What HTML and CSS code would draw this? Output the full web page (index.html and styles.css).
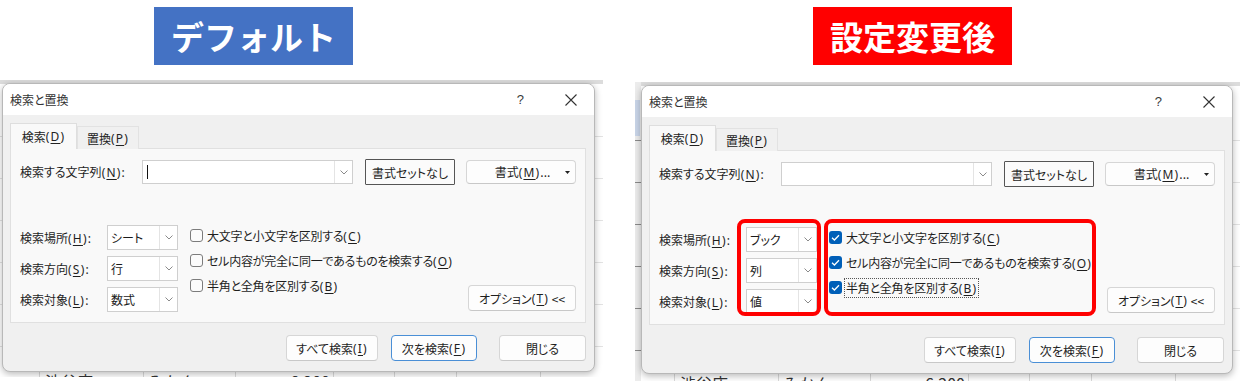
FILE: index.html
```html
<!DOCTYPE html>
<html lang="ja">
<head>
<meta charset="utf-8">
<title>検索と置換</title>
<link rel="stylesheet" href="styles.css">
</head>
<body>
<div class="page">
  <section class="half">
    <div class="tag tag-blue">デフォルト</div>
    <div class="screen screen-left">
      <div class="dialog">
        <div class="titlebar">
          <span class="title">検索と置換</span>
          <span class="help">?</span>
          <svg class="close" width="12" height="12" viewBox="0 0 12 12"><path d="M0.5 0.5L11.5 11.5M11.5 0.5L0.5 11.5"/></svg>
        </div>
        <div class="dbody">
          <div class="tabs">
            <div class="tab tab-active">検索<span class="k">(<u>D</u>)</span></div>
            <div class="tab">置換<span class="k">(<u>P</u>)</span></div>
          </div>
          <div class="panel">
            <div class="find-row">
              <span class="lbl lbl-find">検索する文字列<span class="k">(<u>N</u>):</span></span>
              <div class="input"><span class="field"><span class="caret"></span></span><span class="drop"><svg width="8" height="5" viewBox="0 0 8 5"><polyline points="0.5,0.5 4,4 7.5,0.5"/></svg></span></div>
              <div class="btn btn-noformat">書式セットなし</div>
              <div class="btn btn-format"><span></span><span>書式<span class="k">(<u>M</u>)</span>...</span><svg class="tri" width="5" height="3" viewBox="0 0 5 3"><polygon points="0,0 5,0 2.5,3"/></svg></div>
            </div>
            <div class="opts">
              <div class="combos">
                <div class="crow"><span class="lbl">検索場所<span class="k">(<u>H</u>):</span></span><div class="combo"><span class="field">シート</span><span class="drop"><svg width="8" height="5" viewBox="0 0 8 5"><polyline points="0.5,0.5 4,4 7.5,0.5"/></svg></span></div></div>
                <div class="crow"><span class="lbl">検索方向<span class="k">(<u>S</u>):</span></span><div class="combo"><span class="field">行</span><span class="drop"><svg width="8" height="5" viewBox="0 0 8 5"><polyline points="0.5,0.5 4,4 7.5,0.5"/></svg></span></div></div>
                <div class="crow"><span class="lbl">検索対象<span class="k">(<u>L</u>):</span></span><div class="combo"><span class="field">数式</span><span class="drop"><svg width="8" height="5" viewBox="0 0 8 5"><polyline points="0.5,0.5 4,4 7.5,0.5"/></svg></span></div></div>
              </div>
              <div class="checks">
                <div class="chk"><span class="box"></span><span class="ctext">大文字と小文字を区別する<span class="k">(<u>C</u>)</span></span></div>
                <div class="chk"><span class="box"></span><span class="ctext">セル内容が完全に同一であるものを検索する<span class="k">(<u>O</u>)</span></span></div>
                <div class="chk"><span class="box"></span><span class="ctext">半角と全角を区別する<span class="k">(<u>B</u>)</span></span></div>
              </div>
              <div class="btn btn-opt">オプション<span class="k">(<u>T</u>)</span>&nbsp;&lt;&lt;</div>
            </div>
          </div>
          <div class="footer">
            <div class="btn btn-all">すべて検索<span class="k">(<u>I</u>)</span></div>
            <div class="btn btn-next">次を検索<span class="k">(<u>F</u>)</span></div>
            <div class="btn btn-close">閉じる</div>
          </div>
        </div>
      </div>
      <div class="sheet-row">
        <span class="cell c1">渋谷店</span>
        <span class="cell c2">みかん</span>
        <span class="cell c3">6,200</span>
      </div>
    </div>
  </section>

  <section class="half">
    <div class="tag tag-red">設定変更後</div>
    <div class="screen screen-right">
      <div class="dialog dialog-right">
        <div class="titlebar">
          <span class="title">検索と置換</span>
          <span class="help">?</span>
          <svg class="close" width="12" height="12" viewBox="0 0 12 12"><path d="M0.5 0.5L11.5 11.5M11.5 0.5L0.5 11.5"/></svg>
        </div>
        <div class="dbody">
          <div class="tabs">
            <div class="tab tab-active">検索<span class="k">(<u>D</u>)</span></div>
            <div class="tab">置換<span class="k">(<u>P</u>)</span></div>
          </div>
          <div class="panel">
            <div class="find-row">
              <span class="lbl lbl-find">検索する文字列<span class="k">(<u>N</u>):</span></span>
              <div class="input"><span class="field"></span><span class="drop"><svg width="8" height="5" viewBox="0 0 8 5"><polyline points="0.5,0.5 4,4 7.5,0.5"/></svg></span></div>
              <div class="btn btn-noformat">書式セットなし</div>
              <div class="btn btn-format"><span></span><span>書式<span class="k">(<u>M</u>)</span>...</span><svg class="tri" width="5" height="3" viewBox="0 0 5 3"><polygon points="0,0 5,0 2.5,3"/></svg></div>
            </div>
            <div class="opts">
              <div class="combos">
                <div class="crow"><span class="lbl">検索場所<span class="k">(<u>H</u>):</span></span><div class="combo"><span class="field">ブック</span><span class="drop"><svg width="8" height="5" viewBox="0 0 8 5"><polyline points="0.5,0.5 4,4 7.5,0.5"/></svg></span></div></div>
                <div class="crow"><span class="lbl">検索方向<span class="k">(<u>S</u>):</span></span><div class="combo"><span class="field">列</span><span class="drop"><svg width="8" height="5" viewBox="0 0 8 5"><polyline points="0.5,0.5 4,4 7.5,0.5"/></svg></span></div></div>
                <div class="crow"><span class="lbl">検索対象<span class="k">(<u>L</u>):</span></span><div class="combo"><span class="field">値</span><span class="drop"><svg width="8" height="5" viewBox="0 0 8 5"><polyline points="0.5,0.5 4,4 7.5,0.5"/></svg></span></div></div>
              </div>
              <div class="checks">
                <div class="chk"><span class="box box-on"><svg width="13" height="13" viewBox="0 0 13 13"><polyline points="3,6.8 5.4,9 10,4.2"/></svg></span><span class="ctext">大文字と小文字を区別する<span class="k">(<u>C</u>)</span></span></div>
                <div class="chk"><span class="box box-on"><svg width="13" height="13" viewBox="0 0 13 13"><polyline points="3,6.8 5.4,9 10,4.2"/></svg></span><span class="ctext">セル内容が完全に同一であるものを検索する<span class="k">(<u>O</u>)</span></span></div>
                <div class="chk"><span class="box box-on"><svg width="13" height="13" viewBox="0 0 13 13"><polyline points="3,6.8 5.4,9 10,4.2"/></svg></span><span class="ctext ctext-focus">半角と全角を区別する<span class="k">(<u>B</u>)</span></span></div>
              </div>
              <div class="btn btn-opt">オプション<span class="k">(<u>T</u>)</span>&nbsp;&lt;&lt;</div>
              <div class="mark mark-combos"></div>
              <div class="mark mark-checks"></div>
            </div>
          </div>
          <div class="footer">
            <div class="btn btn-all">すべて検索<span class="k">(<u>I</u>)</span></div>
            <div class="btn btn-next">次を検索<span class="k">(<u>F</u>)</span></div>
            <div class="btn btn-close">閉じる</div>
          </div>
        </div>
      </div>
      <div class="sheet-row">
        <span class="cell c1">渋谷店</span>
        <span class="cell c2">みかん</span>
        <span class="cell c3">6,200</span>
      </div>
    </div>
  </section>
</div>
</body>
</html>
```

FILE: styles.css
```css
* {
  box-sizing: border-box;
  margin: 0;
  padding: 0;
}

html,
body {
  width: 1240px;
  height: 381px;
  overflow: hidden;
  background: #ffffff;
}

body {
  font-family: "Noto Sans CJK JP", "Noto Sans", sans-serif;
  font-size: 12px;
  color: #1c1c1c;
  font-feature-settings: "palt";
}

u {
  text-decoration: underline;
  text-underline-offset: 2px;
  text-decoration-thickness: 1px;
}

/* access-key part like "(D)" – wider Latin like the Windows UI font */
.k {
  font-family: "Noto Sans", "Noto Sans CJK JP", sans-serif;
  letter-spacing: 1.2px;
}

.page {
  display: flex;
  width: 1240px;
  height: 381px;
}

.half {
  width: 620px;
  display: flex;
  flex-direction: column;
}

/* caption labels */
.tag {
  width: 199px;
  height: 58px;
  margin-top: 7px;
  display: flex;
  align-items: center;
  justify-content: center;
  color: #ffffff;
  font-size: 33px;
  font-weight: 700;
  line-height: 1;
  font-feature-settings: normal;
}

.tag-blue {
  background: #4472c4;
  margin-left: 154px;
}

.tag-red {
  background: #ff0000;
  margin-left: 193px;
}

/* excel sheet behind the dialog */
.screen {
  overflow: hidden;
  background-color: #ffffff;
  background-image:
    linear-gradient(#dcdcdc, #dcdcdc),
    linear-gradient(#dadada, #dadada),
    linear-gradient(#dadada, #dadada),
    linear-gradient(#dadada, #dadada),
    linear-gradient(#dadada, #dadada),
    linear-gradient(#dadada, #dadada),
    linear-gradient(#dadada, #dadada),
    linear-gradient(#dadada, #dadada),
    repeating-linear-gradient(to bottom, transparent 0 41px, #e3e3e3 41px 42px);
  background-size:
    100% 4px,
    1px 100%, 1px 100%, 1px 100%, 1px 100%, 1px 100%, 1px 100%, 1px 100%,
    100% 100%;
  background-position:
    0 0,
    39px 0, 143px 0, 235px 0, 333px 0, 394px 0, 456px 0, 540px 0,
    0 15px;
  background-repeat: no-repeat;
}

.screen-left {
  width: 603px;
  height: 297px;
  margin-top: 15px;
}

.screen-right {
  width: 605px;
  height: 299px;
  margin-top: 17px;
  margin-left: 15px;
  background-image:
    linear-gradient(#c9d5e8, #c9d5e8),
    repeating-linear-gradient(to bottom, transparent 0 41px, #8a8a8a 41px 42px),
    linear-gradient(#ececec, #ececec),
    linear-gradient(#dcdcdc, #dcdcdc),
    linear-gradient(#dadada, #dadada),
    linear-gradient(#dadada, #dadada),
    linear-gradient(#dadada, #dadada),
    linear-gradient(#dadada, #dadada),
    linear-gradient(#dadada, #dadada),
    linear-gradient(#dadada, #dadada),
    linear-gradient(#dadada, #dadada),
    repeating-linear-gradient(to bottom, transparent 0 41px, #e3e3e3 41px 42px);
  background-size:
    5px 36px,
    6px 100%,
    6px 100%,
    100% 4px,
    1px 100%, 1px 100%, 1px 100%, 1px 100%, 1px 100%, 1px 100%, 1px 100%,
    100% 100%;
  background-position:
    0 18px,
    0 17px,
    0 0,
    0 0,
    39px 0, 143px 0, 235px 0, 333px 0, 394px 0, 456px 0, 540px 0,
    0 17px;
}

/* dialog */
.dialog {
  width: 593px;
  height: 289px;
  margin: 3px 0 0 2px;
  border: 1px solid #b8b8b8;
  border-radius: 8px;
  background: #f0f0f0;
  box-shadow: 0 2px 7px rgba(0, 0, 0, 0.28);
  display: flex;
  flex-direction: column;
  overflow: hidden;
  position: relative;
}

.dialog-right {
  width: 592px;
  margin: 3px 0 0 6px;
}

.titlebar {
  height: 31px;
  background: #ffffff;
  display: flex;
  align-items: center;
  padding: 0 17px 0 7px;
  flex-shrink: 0;
}

.title {
  color: #333333;
  font-size: 12px;
  flex: 1;
}

.help {
  color: #3a3a3a;
  font-size: 13px;
  font-family: "Liberation Sans", sans-serif;
  margin-right: 41px;
}

.close {
  fill: none;
  stroke: #333333;
  stroke-width: 1.1;
}

.dbody {
  flex: 1;
  padding: 9px 8px 0 7px;
  display: flex;
  flex-direction: column;
}

.tabs {
  display: flex;
  align-items: flex-end;
  height: 25px;
  position: relative;
  z-index: 1;
  margin-bottom: -1px;
}

.tab {
  height: 23px;
  width: 62px;
  display: flex;
  align-items: center;
  justify-content: center;
  border: 1px solid #e2e2e2;
  border-bottom: none;
  background: #f0f0f0;
  color: #222222;
}

.tab-active {
  height: 26px;
  width: 67px;
  background: #f9f9f9;
  border-color: #dedede;
}

.panel {
  width: 576px;
  height: 175px;
  background: #f9f9f9;
  border: 1px solid #e0e0e0;
  padding: 10px 9px 0 9px;
}

.find-row {
  display: flex;
  align-items: center;
  height: 26px;
}

.lbl {
  color: #1e1e1e;
}

.lbl-find {
  width: 122px;
}

.input {
  width: 211px;
  height: 24px;
  margin-right: 12px;
  display: flex;
  background: #ffffff;
  border: 1px solid #cfcfcf;
}

.field {
  flex: 1;
  display: flex;
  align-items: center;
  padding-left: 3px;
  color: #1a1a1a;
}

.caret {
  width: 1px;
  height: 14px;
  background: #111111;
  margin-left: 1px;
}

.drop {
  width: 18px;
  display: flex;
  align-items: center;
  justify-content: center;
  border-left: 1px solid #e4e4e4;
  background: #ffffff;
}

.drop svg {
  fill: none;
  stroke: #8a8a8a;
  stroke-width: 1;
}

.btn {
  height: 26px;
  display: flex;
  align-items: center;
  justify-content: center;
  background: #fdfdfd;
  border: 1px solid #d6d6d6;
  border-bottom-color: #c8c8c8;
  border-radius: 4px;
  color: #1e1e1e;
  white-space: nowrap;
}

.btn-noformat {
  width: 90px;
  margin-right: 11px;
  border: 1px solid #555555;
  border-radius: 1px;
  background: #fbfbfb;
}

.btn-format {
  width: 110px;
  height: 24px;
  display: grid;
  grid-template-columns: 1fr auto 1fr;
  align-items: center;
  padding: 0 5px 0 8px;
}

.tri {
  justify-self: end;
  fill: #222222;
}

.opts {
  display: flex;
  align-items: flex-start;
  margin-top: 40px;
  position: relative;
}

.combos {
  display: flex;
  flex-direction: column;
  gap: 6px;
  width: 158px;
  margin-right: 12px;
}

.crow {
  display: flex;
  align-items: center;
  height: 25px;
}

.crow .lbl {
  width: 87px;
  white-space: nowrap;
}

.combo {
  width: 71px;
  height: 25px;
  flex-shrink: 0;
  display: flex;
  background: #ffffff;
  border: 1px solid #cfcfcf;
}

.checks {
  display: flex;
  flex-direction: column;
  margin-top: -2px;
}

.chk {
  height: 25px;
  display: flex;
  align-items: center;
}

.box {
  width: 13px;
  height: 13px;
  border: 1px solid #7c7c7c;
  border-radius: 3px;
  background: #fbfbfb;
  margin-right: 4px;
  flex-shrink: 0;
}

.box-on {
  border: none;
  background: #005fb8;
  display: flex;
}

.box-on svg {
  fill: none;
  stroke: #ffffff;
  stroke-width: 1.3;
}

.ctext {
  color: #1e1e1e;
  border: 1px solid transparent;
  padding: 0 1px;
  margin-left: -2px;
  letter-spacing: -0.25px;
  white-space: nowrap;
}

.ctext-focus {
  border: 1px dotted #555555;
}

.btn-opt {
  width: 108px;
  margin-left: auto;
  align-self: flex-end;
  margin-bottom: 1px;
}

.mark {
  position: absolute;
  top: -8px;
  height: 97px;
  border: 4px solid #ff0000;
  border-radius: 8px;
  pointer-events: none;
}

.mark-combos {
  left: 78px;
  width: 84px;
}

.mark-checks {
  left: 165px;
  width: 272px;
}

.footer {
  display: flex;
  justify-content: flex-end;
  margin-top: 12px;
}

.btn-all {
  width: 92px;
  margin-right: 13px;
}

.btn-next {
  width: 86px;
  margin-right: 22px;
  border: 1px solid #4a8fd6;
}

.btn-close {
  width: 87px;
}

/* partially visible sheet row */
.sheet-row {
  display: flex;
  margin-top: 1px;
  height: 20px;
  font-size: 16px;
  line-height: 16px;
  color: #333333;
  font-feature-settings: normal;
}

.cell {
  display: block;
}

.c1 {
  width: 143px;
  padding-left: 45px;
}

.c2 {
  width: 92px;
  padding-left: 5px;
}

.c3 {
  width: 95px;
  text-align: right;
}
```
